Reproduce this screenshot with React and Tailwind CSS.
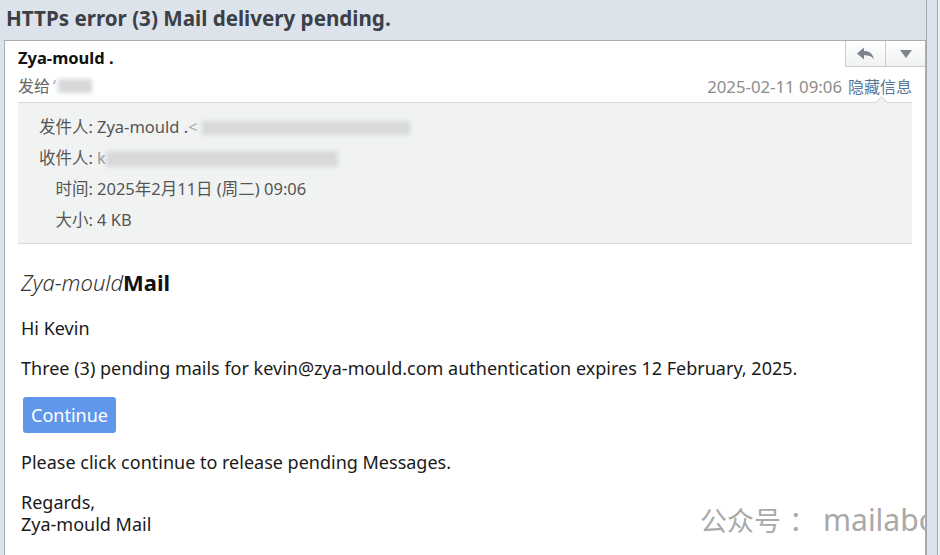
import React from "react";

const cjk = { fontFamily: '"Noto Sans", "Noto Sans CJK SC", sans-serif' };

function Blur({ className }) {
  return <span className={`inline-block align-middle bg-[#d6d8da] blur-[2px] ${className}`} />;
}

function InfoRow({ label, children }) {
  return (
    <div className="flex h-[31px] items-center">
      <span className="w-[75px] text-right shrink-0">{label}</span>
      <span className="ml-[4px] flex items-center">{children}</span>
    </div>
  );
}

export default function App() {
  return (
    <div
      className="relative flex h-[555px] w-[940px] overflow-hidden bg-[#dde3ea]"
      style={cjk}
    >
      <div className="w-[926px] shrink-0 pl-[4px]">
        <div className="flex h-[40px] items-center pl-[2px] pb-[4px]">
          <h1 className="text-[20.6px] font-bold text-[#3b4047]">
            HTTPs error (3) Mail delivery pending.
          </h1>
        </div>

        <div className="h-[600px] border border-[#a9aeb4] bg-white">
          {/* header */}
          <div className="flex justify-between pl-[13px]">
            <div className="pt-[6px]">
              <div className="text-[16.5px] font-bold leading-[22px] text-[#111]">
                Zya-mould .
              </div>
              <div className="mt-[6px] flex items-center text-[16px] leading-[22px] text-[#666]">
                发给 <span className="ml-[3px] text-[#aaa]">‘</span>
                <Blur className="ml-[2px] h-[14px] w-[34px]" />
              </div>
            </div>
            <div className="flex flex-col items-end">
              <div className="flex h-[26px] border-b border-l border-[#c9cdd1] bg-gradient-to-b from-white to-[#f0f1f2]">
                <div className="flex w-[40px] items-center justify-center border-r border-[#c9cdd1]">
                  <svg width="18" height="14" viewBox="0 0 18 14">
                    <path d="M0 6.5 L7 0.5 V4 C12 4 16 6.5 17 12.5 C14.5 9 11.5 8.3 7 8.3 V12.5 Z" fill="#7c838b" />
                  </svg>
                </div>
                <div className="flex w-[39px] items-center justify-center">
                  <svg width="12" height="8" viewBox="0 0 12 8">
                    <path d="M0 0 H12 L6 8 Z" fill="#7c838b" />
                  </svg>
                </div>
              </div>
              <div className="mr-[13px] mt-[9px] flex items-baseline leading-[22px]">
                <span className="text-[16.8px] text-[#8c8c8c]">2025-02-11 09:06</span>
                <span className="ml-[6px] text-[16px] text-[#58779a]">隐藏信息</span>
              </div>
            </div>
          </div>

          {/* info panel */}
          <div className="relative mx-[13px] mt-[4px] border-y border-[#d6d9db] bg-[#f1f3f3] pb-[7px] pt-[9px] text-[16.5px] text-[#555]">
            <div className="absolute right-[26px] top-[-5px] h-[9px] w-[9px] rotate-45 border-l border-t border-[#d6d9db] bg-[#f1f3f3]" />
            <InfoRow label="发件人:">
              Zya-mould .<span className="text-[#aaa]">&lt;</span>
              <Blur className="ml-[4px] h-[14px] w-[208px]" />
            </InfoRow>
            <InfoRow label="收件人:">
              <span className="text-[#999]">k</span>
              <Blur className="h-[16px] w-[232px]" />
            </InfoRow>
            <InfoRow label="时间:">2025年2月11日 (周二) 09:06</InfoRow>
            <InfoRow label="大小:">4 KB</InfoRow>
          </div>

          {/* body */}
          <div className="px-[16px] pt-[23px] text-[18px] text-[#1a1a1a]">
            <div className="text-[22px] leading-[30px]">
              <span className="font-light italic text-[#333]">Zya-mould</span>
              <span className="font-bold text-[#111]">Mail</span>
            </div>
            <p className="mt-[19px] leading-[24px]">Hi Kevin</p>
            <p className="mt-[16px] leading-[24px]">
              Three (3) pending mails for kevin@zya-mould.com authentication expires 12 February, 2025.
            </p>
            <div className="mt-[17px]">
              <button className="ml-[2px] h-[36px] rounded-[3px] bg-[#6097ea] px-[8px] text-[18px] text-white">
                Continue
              </button>
            </div>
            <p className="mt-[17px] leading-[24px]">Please click continue to release pending Messages.</p>
            <p className="mt-[17px] leading-[22px]">
              Regards,
              <br />
              Zya-mould Mail
            </p>
          </div>
        </div>
      </div>

      <div className="z-10 h-full w-[12px] shrink-0 border-x border-[#a3a8ae] bg-[#dce3ea]" />
      <div className="h-full flex-1 bg-[#eef1f4]" />

      <div className="absolute left-[700px] top-[497px] flex items-baseline whitespace-nowrap text-[#a9a9a9]">
        <span className="text-[27px]">公众号</span>
        <span className="ml-[8px] text-[27px]">：</span>
        <span className="ml-[7px] text-[30px]">mailabc</span>
      </div>
    </div>
  );
}
